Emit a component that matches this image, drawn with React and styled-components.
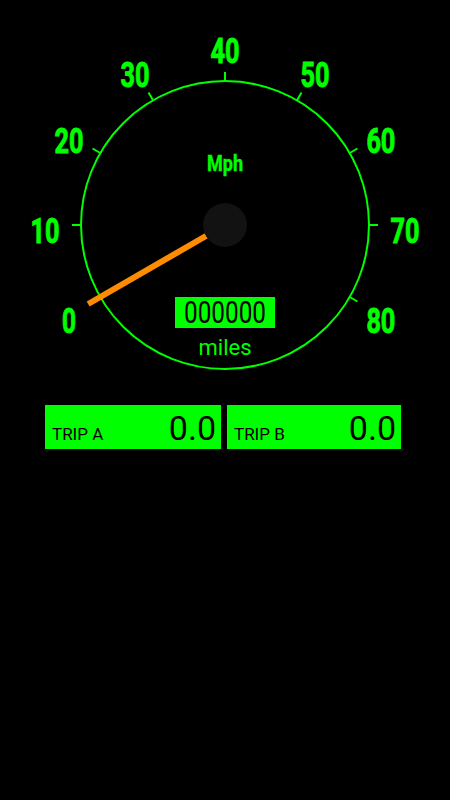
import React from 'react';
import styled, { createGlobalStyle } from 'styled-components';

const GREEN = '#00ff00';
const CX = 225;
const CY = 225;

const GlobalStyle = createGlobalStyle`
  html, body {
    margin: 0;
    padding: 0;
    background: #000;
  }
  body {
    font-family: Roboto, "Liberation Sans", sans-serif;
  }
`;

const Screen = styled.div`
  width: 450px;
  height: 800px;
  background: #000;
  display: flex;
  flex-direction: column;
`;

const GaugeWrap = styled.div`
  width: 450px;
  height: 390px;
  svg {
    display: block;
  }
`;

const TripRow = styled.div`
  display: flex;
  gap: 6px;
  padding: 15px 0 0 45px;
`;

const TripBox = styled.div`
  width: ${(p) => p.$w}px;
  height: 44px;
  box-sizing: border-box;
  background: ${GREEN};
  display: flex;
  align-items: baseline;
  justify-content: space-between;
  padding: 6px 5px 0 7px;
`;

const TripLabel = styled.span`
  font-size: 17px;
  line-height: 17px;
  color: #000;
`;

const TripValue = styled.span`
  font-size: 34px;
  line-height: 34px;
  color: #000;
`;

const polar = (r, deg) => {
  const a = (deg * Math.PI) / 180;
  return [CX + r * Math.cos(a), CY + r * Math.sin(a)];
};

const speeds = [0, 10, 20, 30, 40, 50, 60, 70, 80];

function Gauge({ speed, odometer }) {
  const needleAngle = 150 + speed * 3;
  const [nx, ny] = polar(158, needleAngle);
  return (
    <svg width="450" height="390" viewBox="0 0 450 390">
      <circle cx={CX} cy={CY} r="144" fill="none" stroke={GREEN} strokeWidth="2" />
      {speeds.map((v) => {
        const a = 150 + v * 3;
        const [x1, y1] = polar(144, a);
        const [x2, y2] = polar(153, a);
        const [lx, ly] = polar(180, a);
        return (
          <g key={v}>
            <line x1={x1} y1={y1} x2={x2} y2={y2} stroke={GREEN} strokeWidth="2" />
            <text
              x={lx}
              y={ly + 17.5}
              textAnchor="middle"
              fill={GREEN}
              stroke={GREEN}
              strokeWidth="0.9"
              fontFamily="Roboto, sans-serif"
              fontWeight="bold"
              fontSize="35"
              textLength={v === 0 ? 14 : 29}
              lengthAdjust="spacingAndGlyphs"
            >
              {v}
            </text>
          </g>
        );
      })}
      <text
        x={CX}
        y="171"
        textAnchor="middle"
        fill={GREEN}
        stroke={GREEN}
        strokeWidth="0.4"
        fontFamily="Roboto, sans-serif"
        fontWeight="bold"
        fontSize="22"
        textLength="36"
        lengthAdjust="spacingAndGlyphs"
      >
        Mph
      </text>
      <line x1={CX} y1={CY} x2={nx} y2={ny} stroke="#ff8c00" strokeWidth="6" />
      <circle cx={CX} cy={CY} r="22" fill="#121212" />
      <rect x="175" y="297" width="100" height="31" fill={GREEN} />
      <text
        x={CX}
        y="323"
        textAnchor="middle"
        fill="#000"
        fontFamily="Roboto, sans-serif"
        fontSize="31"
        textLength="82"
        lengthAdjust="spacingAndGlyphs"
      >
        {odometer}
      </text>
      <text
        x={CX}
        y="355"
        textAnchor="middle"
        fill={GREEN}
        fontFamily="Roboto, sans-serif"
        fontSize="22"
      >
        miles
      </text>
    </svg>
  );
}

export default function App() {
  return (
    <Screen>
      <GlobalStyle />
      <GaugeWrap>
        <Gauge speed={0} odometer="000000" />
      </GaugeWrap>
      <TripRow>
        <TripBox $w={176}>
          <TripLabel>TRIP A</TripLabel>
          <TripValue>0.0</TripValue>
        </TripBox>
        <TripBox $w={174}>
          <TripLabel>TRIP B</TripLabel>
          <TripValue>0.0</TripValue>
        </TripBox>
      </TripRow>
    </Screen>
  );
}
